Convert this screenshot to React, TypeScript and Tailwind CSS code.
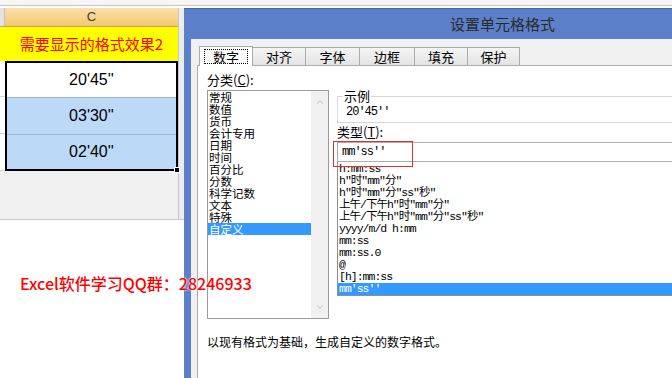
import React from 'react';
import { ChevronUp, ChevronDown } from 'lucide-react';

const categories = ['常规', '数值', '货币', '会计专用', '日期', '时间', '百分比', '分数', '科学记数', '文本', '特殊', '自定义'];

const formats = [
  'h:mm:ss',
  'h"时"mm"分"',
  'h"时"mm"分"ss"秒"',
  '上午/下午h"时"mm"分"',
  '上午/下午h"时"mm"分"ss"秒"',
  'yyyy/m/d h:mm',
  'mm:ss',
  'mm:ss.0',
  '@',
  '[h]:mm:ss',
  "mm'ss''",
];

const tabs = [
  { label: '数字', width: 'w-[54px]' },
  { label: '对齐', width: 'w-[53px]' },
  { label: '字体', width: 'w-[54px]' },
  { label: '边框', width: 'w-[55px]' },
  { label: '填充', width: 'w-[53px]' },
  { label: '保护', width: 'w-[52px]' },
];

const mono = "font-['Liberation_Mono','Noto_Sans_CJK_SC',monospace] tracking-[-1px]";

function Sheet() {
  return (
    <div className="flex w-[184px] shrink-0 flex-col">
      <div className="flex h-[212px] border-b border-[#c8c8c8] bg-[#f0f0f0]">
        <div className="flex w-[178px] flex-col">
          {/* column header */}
          <div className="flex h-[19px] border-b border-[#c6a35c]">
            <div className="w-[5px] border-r border-[#c0c0c0] bg-[#e3e3e3]" />
            <div className="flex flex-1 items-center justify-center bg-linear-to-b from-[#fbe0aa] to-[#f3c76f] font-['Liberation_Sans',sans-serif] text-[13px] text-[#3c3c3c]">
              C
            </div>
          </div>

          {/* title row */}
          <div className="flex h-[34px] items-center justify-center bg-[#ffff00] pl-[5px] text-[15px] text-[#ff0000]">
            需要显示的格式效果2
          </div>

          {/* data rows */}
          <div className="flex h-[110px]">
            <div className="flex w-[5px] flex-col bg-white">
              <div className="h-[36px] border-b border-[#d4d4d4]" />
              <div className="h-[37px] border-b border-[#d4d4d4]" />
              <div className="h-[37px] border-b border-[#d4d4d4]" />
            </div>
            <div className="relative flex flex-1 flex-col border-2 border-black font-['Liberation_Sans',sans-serif] text-[16px]">
              <div className="flex h-[34px] items-center justify-center bg-white">20'45''</div>
              <div className="flex h-[37px] items-center justify-center border-t border-[#9fb7d0] bg-[#bcd9f7]">03'30''</div>
              <div className="flex h-[35px] items-center justify-center border-t border-[#9fb7d0] bg-[#bcd9f7]">02'40''</div>
              <div className="absolute -bottom-[4px] -right-[4px] h-[6px] w-[6px] border border-white bg-black" />
            </div>
          </div>
        </div>
        <div className="flex-1 border-l border-[#c8c8c8] bg-[#ececec]" />
      </div>
    </div>
  );
}

function CategoryList() {
  return (
    <div className="mt-[1px] flex h-[229px] w-[122px] shrink-0 border border-[#9a9a9a] bg-white">
      <div className="flex flex-1 flex-col">
        {categories.map((c) => (
          <div
            key={c}
            className={
              c === '自定义'
                ? 'h-[12px] bg-[#3399ff] pl-[1px] text-[11.5px] leading-[12px] text-white'
                : 'h-[12px] pl-[1px] text-[11.5px] leading-[12px]'
            }
          >
            {c}
          </div>
        ))}
      </div>
      <div className="flex w-[17px] flex-col items-center justify-between bg-[#f0f0f0] py-[6px]">
        <ChevronUp size={10} strokeWidth={2.5} color="#c4c4c4" />
        <ChevronDown size={10} strokeWidth={2.5} color="#c4c4c4" />
      </div>
    </div>
  );
}

function TypePanel() {
  return (
    <div className="w-[360px] shrink-0">
      <fieldset className="border border-[#d8d8d8] pb-[3px] pl-[5px]">
        <legend className="px-[1px] text-[13px] leading-[14px]">示例</legend>
        <div className={`pl-[3px] pt-[2px] text-[12px] leading-[14px] ${mono}`}>20'45''</div>
      </fieldset>

      <div className="mt-[2px] text-[13px] leading-[14px]">
        类型(<span className="underline">T</span>):
      </div>

      <div className={`mt-[3px] flex h-[20px] items-center border border-[#abadb3] bg-white pl-[4px] text-[12px] ${mono}`}>
        mm'ss''
      </div>

      <div className={`border-x border-b border-[#8e8f94] bg-white pt-[1px] text-[11.5px] ${mono}`}>
        {formats.map((f, i) => (
          <div
            key={f}
            className={
              i === formats.length - 1
                ? 'h-[12px] bg-[#3399ff] pl-[1px] leading-[12px] text-white'
                : 'h-[12px] pl-[1px] leading-[12px]'
            }
          >
            {f}
          </div>
        ))}
      </div>
    </div>
  );
}

function Dialog() {
  return (
    <div className="flex min-w-0 flex-1 flex-col border-t border-[#48679f] bg-[#5b7fc8]">
      <div className="flex h-[30px] shrink-0 items-center pl-[266px] text-[15px] text-[#2a2a2a]">
        设置单元格格式
      </div>
      <div className="ml-[7px] flex flex-1 flex-col bg-[#f0f0f0]">
        {/* tabs */}
        <div className="flex items-end pl-[8px] pt-[7px] text-[13px]">
          {tabs.map((t, i) =>
            i === 0 ? (
              <div
                key={t.label}
                className={`relative z-10 -mb-px flex h-[20px] ${t.width} items-center justify-center border-x border-t border-[#acacac] bg-white`}
              >
                <span className="border border-dotted border-black px-[8px] leading-[13px]">{t.label}</span>
              </div>
            ) : (
              <div
                key={t.label}
                className={`flex h-[18px] ${t.width} items-center justify-center border-r border-t border-[#acacac] bg-linear-to-b from-[#f4f4f4] to-[#e4e4e4]`}
              >
                {t.label}
              </div>
            )
          )}
        </div>

        {/* tab panel */}
        <div className="ml-[6px] flex-1 border-l border-t border-[#acacac] bg-white pl-[9px]">
          <div className="pt-[7px] text-[13px] leading-[14px]">
            分类(<span className="underline">C</span>):
          </div>
          <div className="mt-[2px] flex gap-[8px]">
            <CategoryList />
            <TypePanel />
          </div>
          <div className="mt-[16px] text-[12px] leading-[14px]">以现有格式为基础，生成自定义的数字格式。</div>
        </div>
      </div>
    </div>
  );
}

export default function App() {
  return (
    <div className="relative flex h-[378px] w-[672px] flex-col overflow-hidden bg-white font-['Noto_Sans_CJK_SC','Liberation_Sans',sans-serif] text-black">
      <div className="h-[6px] shrink-0 border-b border-[#c4c4c4] bg-[#f6f6f6]" />
      <div className="flex min-h-0 flex-1 pt-[2px]">
        <Sheet />
        <Dialog />
      </div>

      {/* red mark around the type box */}
      <div className="pointer-events-none absolute left-[333px] top-[141px] h-[26px] w-[80px] border border-[#e0302c]" />

      {/* watermark */}
      <div className="pointer-events-none absolute left-[20px] top-[272px] text-[16px] leading-[22px] font-medium text-[#ff0000] [text-shadow:0_0_2px_#fff,0_0_2px_#fff]">
        Excel软件学习QQ群：28246933
      </div>
    </div>
  );
}
